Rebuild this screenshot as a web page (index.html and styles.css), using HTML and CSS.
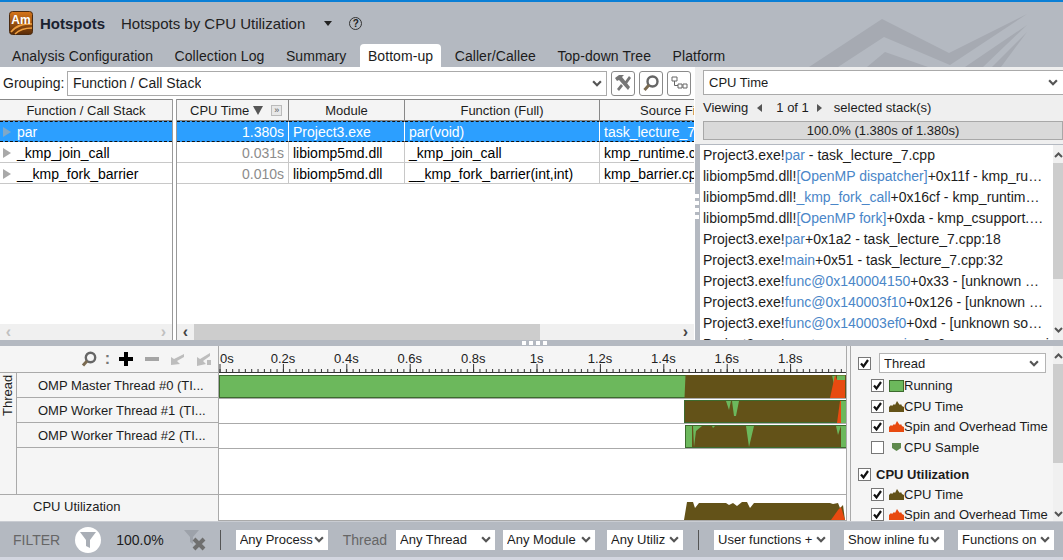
FILE: index.html
```html
<!DOCTYPE html>
<html lang="en">
<head>
    <meta charset="UTF-8" />
    <title>Hotspots by CPU Utilization</title>
    <link rel="stylesheet" href="styles.css">
</head>
<body>
    <svg class="defs" width="0" height="0">
        <symbol id="chev" viewBox="0 0 9 6"><path d="M1 1l3.5 3.5L8 1" fill="none" stroke="#555" stroke-width="2"/></symbol>
        <symbol id="hill" viewBox="0 0 15 11"><path d="M0 11V6l2-2 1 1 2-2 1 1 2-4 2 3 1 1 1-1 1 2 2 1v5z"/></symbol>
        <symbol id="check" viewBox="0 0 13 13"><path d="M3 6.5l2.5 3L10 3" fill="none" stroke="#111" stroke-width="2.2"/></symbol>
    </svg>

    <header class="app-header">
        <svg class="header-art" width="320" height="67" viewBox="0 0 320 67">
            <path d="M66 67L139 19 206 53 284 14 207 65 141 37 95 67z" fill="#a6aab2"/>
            <path d="M124 67L142 52 185 67z" fill="#a6aab2"/>
            <path d="M222 67L284 25 240 67zM249 67L284 32 258 67z" fill="#a6aab2"/>
        </svg>
        <div class="title-row">
            <svg class="logo" width="24" height="24" viewBox="0 0 24 24">
                <defs>
                    <linearGradient id="logoFill" x1="0" y1="0" x2="0" y2="1">
                        <stop offset="0" stop-color="#d8761a"/>
                        <stop offset="1" stop-color="#5a2c08"/>
                    </linearGradient>
                </defs>
                <rect x="0.5" y="0.5" width="23" height="23" rx="3" fill="url(#logoFill)" stroke="#4a2a10"/>
                <path d="M2 21C8 14 14 13 23 13M6 23C11 18 16 17 23 17" fill="none" stroke="#f0a040" stroke-width="1.6"/>
                <text x="12" y="13" class="logo-text">Am</text>
            </svg>
            <span class="app-name">Hotspots</span>
            <span class="view-name">Hotspots by CPU Utilization</span>
            <span class="caret"></span>
            <span class="help">?</span>
        </div>
        <nav class="tabs">
            <a>Analysis Configuration</a>
            <a>Collection Log</a>
            <a>Summary</a>
            <a class="active">Bottom-up</a>
            <a>Caller/Callee</a>
            <a>Top-down Tree</a>
            <a>Platform</a>
        </nav>
    </header>

    <main class="main">
        <section class="grid-panel">
            <div class="grouping">
                <label>Grouping:</label>
                <div class="combo combo-group"><span>Function / Call Stack</span><svg width="10" height="7"><use href="#chev"/></svg></div>
                <button class="tool"><svg width="18" height="18" viewBox="0 0 18 18"><path d="M1 4l4-3h5l-2 2 8 10-2 3L5 6 3 7zM10 9l5-7 2 2-5 7zM7 10l2 2-4 5-2-2z" fill="#767676"/></svg></button>
                <button class="tool"><svg width="18" height="18" viewBox="0 0 18 18"><circle cx="10.5" cy="7.5" r="5" fill="none" stroke="#666" stroke-width="2.4"/><path d="M7 11l-4.5 5" stroke="#7a6a50" stroke-width="3"/></svg></button>
                <button class="tool"><svg width="18" height="18" viewBox="0 0 18 18"><path d="M2 3h5v4H2zM8 10h4v4H8zM13 10h4v4h-4z" fill="#fff" stroke="#666"/><path d="M4.5 7v4.5H8" fill="none" stroke="#666"/></svg></button>
            </div>
            <div class="tables">
                <div class="tree-col">
                    <div class="th">Function / Call Stack</div>
                    <div class="tree-row selected"><span class="arrow"></span>par</div>
                    <div class="tree-row"><span class="arrow"></span>_kmp_join_call</div>
                    <div class="tree-row"><span class="arrow"></span>__kmp_fork_barrier</div>
                    <div class="fill"></div>
                    <div class="hscroll"><span class="scroll-arrow off">‹</span><span class="scroll-gap"></span><span class="scroll-arrow off">›</span></div>
                </div>
                <div class="data-col">
                    <div class="data-grid">
                        <div class="th th-sort">CPU Time <span class="sort"></span><span class="expand">»</span></div>
                        <div class="th">Module</div>
                        <div class="th">Function (Full)</div>
                        <div class="th th-clip">Source Fi</div>

                        <div class="td num selected">1.380s</div>
                        <div class="td selected">Project3.exe</div>
                        <div class="td selected">par(void)</div>
                        <div class="td selected">task_lecture_7.cpp</div>

                        <div class="td num">0.031s</div>
                        <div class="td">libiomp5md.dll</div>
                        <div class="td">_kmp_join_call</div>
                        <div class="td">kmp_runtime.cpp</div>

                        <div class="td num">0.010s</div>
                        <div class="td">libiomp5md.dll</div>
                        <div class="td">__kmp_fork_barrier(int,int)</div>
                        <div class="td">kmp_barrier.cpp</div>
                    </div>
                    <div class="fill"></div>
                    <div class="hscroll"><span class="scroll-arrow">‹</span><span class="scroll-thumb"></span><span class="scroll-gap"></span><span class="scroll-arrow">›</span></div>
                </div>
            </div>
        </section>

        <section class="stack-panel">
            <div class="combo combo-metric"><span>CPU Time</span><svg width="10" height="7"><use href="#chev"/></svg></div>
            <div class="viewing">
                <span>Viewing</span><span class="tri-left"></span><span>1 of 1</span><span class="tri-right"></span><span>selected stack(s)</span>
            </div>
            <div class="progress">100.0% (1.380s of 1.380s)</div>
            <div class="stack-wrap">
                <ul class="stack">
                    <li>Project3.exe!<b>par</b> - task_lecture_7.cpp</li>
                    <li>libiomp5md.dll!<b>[OpenMP dispatcher]</b>+0x11f - kmp_ru…</li>
                    <li>libiomp5md.dll!<b>_kmp_fork_call</b>+0x16cf - kmp_runtim…</li>
                    <li>libiomp5md.dll!<b>[OpenMP fork]</b>+0xda - kmp_csupport.…</li>
                    <li>Project3.exe!<b>par</b>+0x1a2 - task_lecture_7.cpp:18</li>
                    <li>Project3.exe!<b>main</b>+0x51 - task_lecture_7.cpp:32</li>
                    <li>Project3.exe!<b>func@0x140004150</b>+0x33 - [unknown …</li>
                    <li>Project3.exe!<b>func@0x140003f10</b>+0x126 - [unknown …</li>
                    <li>Project3.exe!<b>func@0x140003ef0</b>+0xd - [unknown so…</li>
                    <li>Project3.exe!<b>_scrt_common_main</b>+0x6 - exe_common.inl:18</li>
                </ul>
                <div class="vscroll stack-scroll"><svg class="flip" width="9" height="6"><use href="#chev"/></svg><span class="vthumb"></span><svg width="9" height="6"><use href="#chev"/></svg></div>
            </div>
            <span class="grip-v"><i></i><i></i><i></i><i></i></span>
        </section>
    </main>

    <div class="splitter"><span class="grip-h"><i></i><i></i><i></i><i></i></span></div>

    <section class="timeline">
        <div class="tl-left">
            <div class="tl-tools">
                <svg width="16" height="16" viewBox="0 0 16 16"><circle cx="9.5" cy="6.5" r="4.7" fill="none" stroke="#666" stroke-width="2.4"/><path d="M6 10l-4 4.5" stroke="#7a6a50" stroke-width="3"/></svg>
                <span class="colon">:</span>
                <svg width="16" height="16" viewBox="0 0 16 16"><path d="M6 1h4v5h5v4h-5v5H6v-5H1V6h5z" fill="#000"/></svg>
                <svg width="16" height="16" viewBox="0 0 16 16"><path d="M1 6h14v4H1z" fill="#a5a5a5"/></svg>
                <svg width="16" height="16" viewBox="0 0 16 16"><path d="M1 14V6l3 2 10-5v3L7 10l3 3z" fill="#bdbdbd"/></svg>
                <svg width="16" height="16" viewBox="0 0 16 16"><path d="M1 15V6l3 2 10-6v3L7 10l3 3zM11 9h4v5h-4z" fill="#bdbdbd"/></svg>
            </div>
            <div class="tl-group">
                <div class="group-label"><span>Thread</span></div>
                <div class="group-rows">
                    <div class="tl-row">OMP Master Thread #0 (TI...</div>
                    <div class="tl-row">OMP Worker Thread #1 (TI...</div>
                    <div class="tl-row">OMP Worker Thread #2 (TI...</div>
                    <div class="tl-row tl-blank"></div>
                </div>
            </div>
            <div class="tl-util">CPU Utilization</div>
        </div>

        <svg class="chart" width="628" height="175" viewBox="219 346 628 175">
            <rect x="218" y="346" width="630" height="27" fill="#f5f5f5"/>
            <rect x="218" y="373" width="630" height="148" fill="#fff"/>
            <g class="ruler-text">
                <text x="220" y="363">0s</text>
                <text class="mid" x="283" y="363">0.2s</text>
                <text class="mid" x="346.4" y="363">0.4s</text>
                <text class="mid" x="409.8" y="363">0.6s</text>
                <text class="mid" x="473.2" y="363">0.8s</text>
                <text class="mid" x="536.6" y="363">1s</text>
                <text class="mid" x="600" y="363">1.2s</text>
                <text class="mid" x="663.4" y="363">1.4s</text>
                <text class="mid" x="726.8" y="363">1.6s</text>
                <text class="mid" x="790.2" y="363">1.8s</text>
            </g>
            <path d="M219 372.5H846" stroke="#333"/>
            <line x1="219.5" x2="846" y1="370.5" y2="370.5" stroke="#333" stroke-width="3" stroke-dasharray="1 5.34"/>
            <line x1="219.5" x2="846" y1="368" y2="368" stroke="#333" stroke-width="8" stroke-dasharray="1 62.4"/>
            <g stroke="#aaa">
                <path d="M219 398.5H846M219 423.5H846M219 448.5H846M219 494.5H846M219 520.5H846"/>
            </g>

            <rect x="219.5" y="375.5" width="626" height="22" fill="#6cb85c" stroke="#3c6b2e"/>
            <path d="M685.5 375H832L834 385 836 375H846V398H684.5z" fill="#635218"/>
            <path d="M830 398L835 375 837 380H845V398z" fill="#e84a10"/>
            <path d="M837 375.5H845V380H837z" fill="#6cb85c"/>

            <rect x="684.5" y="400.5" width="161.5" height="22" fill="#635218" stroke="#3c6b2e"/>
            <path d="M726 401H731L729 410zM732 401H739L736 416H734z" fill="#6cb85c"/>
            <path d="M837 423L840 401H841V423z" fill="#e84a10"/>
            <path d="M841 401H846V423H841z" fill="#6cb85c"/>

            <rect x="685.5" y="425.5" width="160.5" height="22" fill="#635218" stroke="#3c6b2e"/>
            <path d="M686 426H692V447H686zM693 426H702L696 431 694 447zM712 426H715L713 428zM746 426H754L749 447zM836 426H841L838 435zM841 426H846V447H841z" fill="#6cb85c"/>

            <path d="M684 520L687 502H693L695 508 699 503H726L729 505 733 503 737 506 742 502H747L750 508 754 503H830L833 504 838 503 840 508 843 505 845 520z" fill="#635218"/>
            <path d="M831 520L838 510 841 507 845 520z" fill="#e84a10"/>
        </svg>

        <aside class="legend">
            <div class="legend-body">
                <div class="lg-head"><span class="cb on"><svg width="13" height="13"><use href="#check"/></svg></span><div class="combo combo-thread"><span>Thread</span><svg width="10" height="7"><use href="#chev"/></svg></div></div>
                <div class="lg-item"><span class="cb on"><svg width="13" height="13"><use href="#check"/></svg></span><span class="swatch-run"></span>Running</div>
                <div class="lg-item"><span class="cb on"><svg width="13" height="13"><use href="#check"/></svg></span><svg class="hill brown" width="15" height="11"><use href="#hill"/></svg>CPU Time</div>
                <div class="lg-item"><span class="cb on"><svg width="13" height="13"><use href="#check"/></svg></span><svg class="hill orange" width="15" height="11"><use href="#hill"/></svg>Spin and Overhead Time</div>
                <div class="lg-item"><span class="cb"></span><svg class="hill" width="15" height="11" viewBox="0 0 15 11"><path d="M3 1h9v5l-4.5 3L3 6z" fill="#5f8a4e"/></svg>CPU Sample</div>
                <div class="lg-head lg-bold"><span class="cb on"><svg width="13" height="13"><use href="#check"/></svg></span>CPU Utilization</div>
                <div class="lg-item"><span class="cb on"><svg width="13" height="13"><use href="#check"/></svg></span><svg class="hill brown" width="15" height="11"><use href="#hill"/></svg>CPU Time</div>
                <div class="lg-item"><span class="cb on"><svg width="13" height="13"><use href="#check"/></svg></span><svg class="hill orange" width="15" height="11"><use href="#hill"/></svg>Spin and Overhead Time</div>
            </div>
            <div class="vscroll legend-scroll"><svg class="flip" width="9" height="6"><use href="#chev"/></svg><span class="vthumb"></span><svg width="9" height="6"><use href="#chev"/></svg></div>
        </aside>
    </section>

    <footer class="filter-bar">
        <span class="f-label">FILTER</span>
        <span class="f-funnel ml-15"><svg width="16" height="18" viewBox="0 0 16 18"><path d="M0 1h16L10 9v8l-4-2V9z" fill="#a9aeb6"/></svg></span>
        <span class="f-pct ml-15">100.0%</span>
        <svg class="ml-19" width="24" height="24" viewBox="0 0 24 24"><path d="M1 2h15l-6 7v7l-3-2V9z" fill="#9da2aa"/><path d="M11 11l10 10M21 11L11 21" stroke="#6f6f6f" stroke-width="4"/></svg>
        <span class="f-sep ml-13"></span>
        <div class="combo f-combo w-92 ml-15"><span>Any Process</span><svg width="10" height="7"><use href="#chev"/></svg></div>
        <span class="f-label ml-15">Thread</span>
        <div class="combo f-combo w-99 ml-9"><span>Any Thread</span><svg width="10" height="7"><use href="#chev"/></svg></div>
        <div class="combo f-combo w-92 ml-8"><span>Any Module</span><svg width="10" height="7"><use href="#chev"/></svg></div>
        <div class="combo f-combo w-76 ml-12"><span>Any Utiliz</span><svg width="10" height="7"><use href="#chev"/></svg></div>
        <span class="f-sep ml-15"></span>
        <div class="combo f-combo w-116 ml-15"><span>User functions +</span><svg width="10" height="7"><use href="#chev"/></svg></div>
        <div class="combo f-combo w-100 ml-14"><span>Show inline fu</span><svg width="10" height="7"><use href="#chev"/></svg></div>
        <div class="combo f-combo w-96 ml-14"><span>Functions on</span><svg width="10" height="7"><use href="#chev"/></svg></div>
    </footer>
    <div class="bottom-edge"></div>
</body>
</html>
```

FILE: styles.css
```css
* {
    box-sizing: border-box;
}

body {
    margin: 0;
    width: 1063px;
    height: 560px;
    overflow: hidden;
    background-color: #b4b9c1;
    color: #1c1c1c;
    font-family: "Liberation Sans", Arial, sans-serif;
    font-size: 14px;
}

.defs {
    position: absolute;
}

/* header */
.app-header {
    position: relative;
    height: 67px;
    border-top: 2px solid #0a7fd6;
}

.header-art {
    position: absolute;
    top: -2px;
    right: 0;
}

.title-row {
    position: relative;
    display: flex;
    align-items: center;
    height: 42px;
    padding-left: 9px;
}

.logo-text {
    fill: #fff;
    font-size: 12px;
    font-weight: bold;
    text-anchor: middle;
}

.app-name {
    margin-left: 7px;
    font-size: 15px;
    font-weight: bold;
    color: #1a2230;
}

.view-name {
    margin-left: 16px;
    font-size: 15px;
    color: #222;
}

.caret {
    margin-left: 19px;
    border-left: 4px solid transparent;
    border-right: 4px solid transparent;
    border-top: 5px solid #222;
}

.help {
    display: flex;
    align-items: center;
    justify-content: center;
    margin-left: 17px;
    width: 13px;
    height: 13px;
    border: 1.5px solid #333;
    border-radius: 50%;
    font-size: 10px;
    font-weight: bold;
}

.tabs {
    position: relative;
    display: flex;
    height: 23px;
    padding-left: 1.25px;
}

.tabs a {
    margin: 0 2.75px;
    padding: 4px 8px 0;
    border-radius: 4px 4px 0 0;
    white-space: nowrap;
    letter-spacing: 0.08px;
}

.tabs a.active {
    background-color: #fff;
}

/* upper area */
.main {
    display: flex;
    height: 273px;
}

.grid-panel {
    display: flex;
    flex-direction: column;
    width: 695px;
    background-color: #fff;
}

.grouping {
    display: flex;
    align-items: center;
    height: 32px;
    padding: 0 3px;
    flex-shrink: 0;
}

.grouping label {
    width: 64px;
    flex-shrink: 0;
}

.combo {
    display: flex;
    align-items: center;
    justify-content: space-between;
    background-color: #fff;
    white-space: nowrap;
    overflow: hidden;
}

.combo span {
    overflow: hidden;
}

.combo svg {
    flex-shrink: 0;
}

.combo-group {
    width: 540px;
    height: 25px;
    padding: 0 4px 0 5px;
    border: 1px solid #aaa;
}

.tool {
    display: flex;
    align-items: center;
    justify-content: center;
    width: 24px;
    height: 25px;
    margin-left: 4px;
    padding: 0;
    background-color: #fff;
    border: 1px solid #8a8a8a;
    border-radius: 3px;
}

.tables {
    display: flex;
    flex: 1;
    min-height: 0;
}

.tree-col {
    display: flex;
    flex-direction: column;
    width: 173px;
    border-right: 1px solid #999;
}

.data-col {
    display: flex;
    flex-direction: column;
    width: 518px;
    margin-left: 3px;
    border-left: 1px solid #999;
    overflow: hidden;
}

.th {
    display: flex;
    align-items: center;
    justify-content: center;
    height: 22px;
    background-color: #f4f4f4;
    border-top: 1px solid #888;
    border-bottom: 1px solid #888;
    font-size: 13px;
    white-space: nowrap;
}

.tree-col .th {
    flex-shrink: 0;
}

.tree-row {
    display: flex;
    align-items: center;
    height: 21px;
    padding-top: 1px;
    flex-shrink: 0;
    border-bottom: 1px solid #c8c8c8;
    color: #000;
}

.arrow {
    margin: 0 6px 0 3px;
    border-top: 5px solid transparent;
    border-bottom: 5px solid transparent;
    border-left: 8px solid #a9a9a9;
}

.selected {
    background-color: #2c9fff;
    color: #fff;
    border-top: 1px dashed #111;
    border-bottom: 1px dashed #111;
}

.tree-row.selected .arrow {
    border-left-color: #7fa8c8;
}

.data-grid {
    display: grid;
    grid-template-columns: 112px 116px 195px 95px;
}

.th-sort {
    justify-content: flex-start;
    padding-left: 13px;
    border-right: 1px solid #888;
}

.data-grid .th {
    border-right: 1px solid #888;
}

.th-clip {
    justify-content: flex-start;
    padding-left: 40px;
    overflow: hidden;
}

.sort {
    margin: 1px 0 0 4px;
    border-left: 5px solid transparent;
    border-right: 5px solid transparent;
    border-top: 9px solid #555;
}

.expand {
    display: flex;
    align-items: center;
    justify-content: center;
    margin-left: 8px;
    width: 11px;
    height: 11px;
    background-color: #e8e8e8;
    border: 1px solid #bbb;
    font-size: 9px;
    line-height: 1;
    color: #555;
}

.td {
    display: flex;
    align-items: center;
    height: 21px;
    padding: 1px 0 0 4px;
    border-right: 1px solid #c8c8c8;
    border-bottom: 1px solid #c8c8c8;
    white-space: nowrap;
    overflow: hidden;
    color: #000;
}

.td.selected {
    color: #fff;
    border-right-color: #fff;
    border-bottom: 1px dashed #111;
}

.num {
    justify-content: flex-end;
    padding: 1px 4px 0 0;
    color: #8c8c8c;
}

.fill {
    flex: 1;
}

.hscroll {
    display: flex;
    align-items: center;
    height: 16px;
    flex-shrink: 0;
    background-color: #f0f0f0;
}

.scroll-arrow {
    width: 17px;
    text-align: center;
    font-size: 16px;
    font-weight: bold;
    line-height: 14px;
    color: #444;
}

.scroll-arrow.off {
    color: #c0c0c0;
}

.scroll-thumb {
    width: 346px;
    height: 16px;
    background-color: #cdcdcd;
}

.scroll-gap {
    flex: 1;
}

/* right panel */
.stack-panel {
    position: relative;
    display: flex;
    flex-direction: column;
    flex: 1;
    background-color: #efefef;
    padding-top: 3px;
    min-width: 0;
}

.combo-metric {
    width: 370px;
    height: 25px;
    margin-left: 8px;
    padding: 0 14px 0 5px;
    border: 1px solid #aaa;
    font-size: 13px;
    flex-shrink: 0;
}

.viewing {
    display: flex;
    align-items: center;
    height: 21px;
    margin: 2px 0 0 8px;
    font-size: 13px;
    flex-shrink: 0;
}

.tri-left {
    margin: 0 14px 0 9px;
    border-top: 4px solid transparent;
    border-bottom: 4px solid transparent;
    border-right: 5px solid #555;
}

.tri-right {
    margin: 0 12px 0 8px;
    border-top: 4px solid transparent;
    border-bottom: 4px solid transparent;
    border-left: 5px solid #555;
}

.progress {
    display: flex;
    align-items: center;
    justify-content: center;
    width: 360px;
    height: 19px;
    margin: 3px 0 0 8px;
    background-color: #d9d9d9;
    border: 1px solid #a8a8a8;
    font-size: 13px;
    flex-shrink: 0;
}

.stack-wrap {
    display: flex;
    flex: 1;
    min-height: 0;
    margin-top: 4px;
    border-top: 1px solid #b4b9c1;
    border-left: 5px solid #b4b9c1;
    background-color: #fff;
}

.stack {
    flex: 1;
    margin: 0;
    padding: 0 0 0 3px;
    list-style: none;
    overflow: hidden;
    min-width: 0;
}

.stack li {
    height: 21px;
    line-height: 21px;
    white-space: nowrap;
}

.stack b {
    font-weight: normal;
    color: #4a86c8;
}

.vscroll {
    display: flex;
    flex-direction: column;
    align-items: center;
    justify-content: space-between;
    width: 10px;
    flex-shrink: 0;
    padding: 7px 0;
    background-color: #f0f0f0;
}

.vthumb {
    flex: 1;
    align-self: stretch;
    margin: 5px 0 48px;
    background-color: #cdcdcd;
}

.flip {
    transform: rotate(180deg);
}

.grip-v {
    position: absolute;
    top: 127px;
    left: 0;
    display: flex;
    flex-direction: column;
    gap: 3px;
}

.grip-v i,
.grip-h i {
    display: block;
    width: 4px;
    height: 4px;
    background-color: #fff;
}

.splitter {
    position: relative;
    height: 6px;
}

.grip-h {
    position: absolute;
    top: 1px;
    left: 522px;
    display: flex;
    gap: 3px;
}

/* timeline */
.timeline {
    display: flex;
    height: 175px;
}

.tl-left {
    display: flex;
    flex-direction: column;
    width: 219px;
    background-color: #f5f5f5;
    border-right: 1px solid #aaa;
    font-size: 13px;
    flex-shrink: 0;
}

.tl-tools {
    display: flex;
    align-items: center;
    justify-content: flex-end;
    gap: 10px;
    height: 27px;
    padding-right: 6px;
    border-bottom: 1px solid #aaa;
    flex-shrink: 0;
}

.colon {
    margin: 0 -2px;
    font-size: 16px;
    font-weight: bold;
    color: #777;
}

.tl-group {
    display: flex;
    height: 122px;
    flex-shrink: 0;
    border-bottom: 1px solid #aaa;
}

.group-label {
    display: flex;
    width: 17px;
    border-right: 1px solid #aaa;
    flex-shrink: 0;
}

.group-label span {
    height: 44px;
    writing-mode: vertical-rl;
    transform: rotate(180deg);
    text-align: center;
    line-height: 16px;
}

.group-rows {
    flex: 1;
    display: flex;
    flex-direction: column;
}

.tl-row {
    display: flex;
    align-items: center;
    justify-content: flex-start;
    height: 25px;
    padding: 1px 0 0 21px;
    border-bottom: 1px solid #aaa;
    flex-shrink: 0;
    white-space: nowrap;
}

.tl-blank {
    flex: 1;
    border-bottom: 0;
}

.tl-util {
    padding: 4px 0 0 33px;
    flex: 1;
}

.chart {
    display: block;
    flex-shrink: 0;
}

.ruler-text text {
    font-size: 13px;
    fill: #222;
}

.ruler-text .mid {
    text-anchor: middle;
}

.legend {
    display: flex;
    flex: 1;
    min-width: 0;
    margin-left: -1px;
    background-color: #f5f5f5;
    border-left: 1px solid #aaa;
    font-size: 13px;
    overflow: hidden;
}

.legend-body {
    flex: 1;
    margin-left: 3px;
    padding: 7px 0 0 7px;
    border-left: 1px solid #aaa;
    min-width: 0;
    overflow: hidden;
}

.lg-head {
    display: flex;
    align-items: center;
    gap: 8px;
    height: 20px;
    margin-bottom: 2.5px;
}

.lg-bold {
    margin: 6.5px 0 0;
    gap: 5px;
    font-weight: bold;
}

.combo-thread {
    width: 167px;
    height: 20px;
    padding: 0 6px 0 4px;
    border: 1px solid #b4b4b4;
}

.lg-item {
    display: flex;
    align-items: center;
    height: 20.5px;
    padding-left: 13px;
    white-space: nowrap;
}

.cb {
    display: inline-flex;
    width: 13px;
    height: 13px;
    background-color: #fff;
    border: 1px solid #777;
    flex-shrink: 0;
}

.cb svg {
    margin: -1px;
}

.swatch-run {
    width: 15px;
    height: 12px;
    margin-left: 5px;
    background-color: #6cb85c;
    border: 1px solid #3c6b2e;
}

.hill {
    margin-left: 5px;
    flex-shrink: 0;
}

.brown {
    fill: #635218;
}

.orange {
    fill: #e84a10;
}

.legend-scroll {
    padding-bottom: 4px;
}

/* filter bar */
.filter-bar {
    display: flex;
    align-items: center;
    height: 36px;
    padding-left: 13px;
    border-top: 1px solid #c9ccd2;
}

.f-label {
    color: #666;
}

.f-funnel {
    display: flex;
    align-items: center;
    justify-content: center;
    width: 26px;
    height: 26px;
    background-color: #fff;
    border-radius: 50%;
}

.f-sep {
    width: 1px;
    height: 20px;
    background-color: #555;
}

.f-combo {
    height: 20px;
    padding: 0 4px;
    font-size: 13px;
}

.f-combo span {
    flex: 1;
}

.w-76 { width: 76px; }
.w-92 { width: 92px; }
.w-96 { width: 96px; }
.w-99 { width: 99px; }
.w-100 { width: 100px; }
.w-116 { width: 116px; }

.ml-8 { margin-left: 8px; }
.ml-9 { margin-left: 9px; }
.ml-12 { margin-left: 12px; }
.ml-13 { margin-left: 13px; }
.ml-14 { margin-left: 14px; }
.ml-15 { margin-left: 15px; }
.ml-19 { margin-left: 19px; }

.bottom-edge {
    height: 3px;
    background-color: #d3d6e0;
}
```
